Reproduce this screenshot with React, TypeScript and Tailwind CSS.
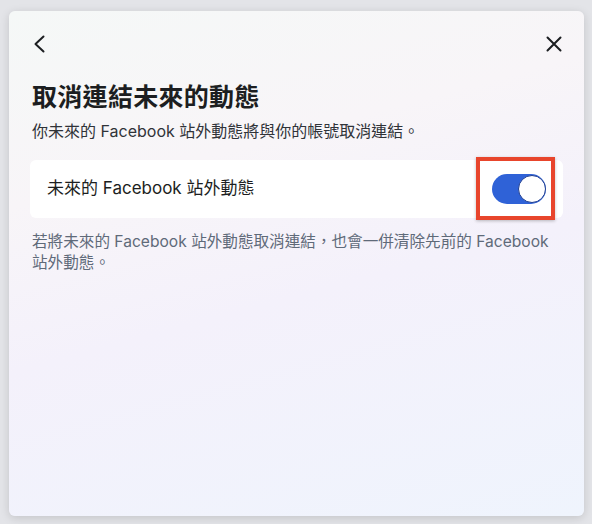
const font = {
  fontFamily: '"Inter", "Noto Sans CJK TC", sans-serif',
};

const App = () => {
  return (
    <div
      className="w-[592px] h-[524px] bg-[#e3e4e8] pt-[11px] pl-[9px] pr-[8px] pb-[8px]"
      style={font}
    >
      <div className="h-full rounded-[6px] shadow-[0_2px_10px_rgba(0,0,0,0.14)] bg-[linear-gradient(165deg,#f5f8f7_0%,#f8f5f8_30%,#f4f1fb_55%,#eff4fd_100%)] px-[21px] pt-[24px]">
        {/* header: back + close */}
        <div className="flex items-center justify-between h-[18px] pl-[3px] pr-[1px]">
          <svg width="13" height="18" viewBox="0 0 13 18" fill="none">
            <path d="M10.5 1.5 L2.5 9 L10.5 16.5" stroke="#1c1e21" strokeWidth="2" strokeLinecap="round" strokeLinejoin="round" />
          </svg>
          <svg width="16" height="16" viewBox="0 0 16 16" fill="none">
            <path d="M1.5 1.5 L14.5 14.5 M14.5 1.5 L1.5 14.5" stroke="#1c1e21" strokeWidth="2" strokeLinecap="round" />
          </svg>
        </div>

        {/* title */}
        <h1 className="mt-[29px] px-[2px] text-[25px] leading-[30px] font-bold text-[#1c1e21] tracking-[0.3px]">
          取消連結未來的動態
        </h1>
        <p className="mt-[8px] px-[2px] text-[16px] leading-[22px] text-[#303338]">
          你未來的 Facebook 站外動態將與你的帳號取消連結。
        </p>

        {/* setting row */}
        <div className="relative mt-[18px] h-[58px] rounded-[6px] bg-white flex items-center justify-between pl-[17px] pr-[17px]">
          <span className="text-[17px] text-[#1c1e21]">未來的 Facebook 站外動態</span>
          <div className="relative w-[54px] h-[30px] rounded-full bg-[#2f62d7]">
            <div className="absolute right-0 top-[1px] w-[28px] h-[28px] rounded-full bg-white border-[1.5px] border-[#1d3d91]" />
          </div>
          {/* highlight box */}
          <div className="absolute right-[8px] top-[-3px] w-[79px] h-[63px] border-[4px] border-[#e8452c] shadow-[0_1px_3px_rgba(0,0,0,0.25)]" />
        </div>

        <p className="mt-[13px] pl-[2px] text-[15.6px] leading-[21px] text-[#5f6a79]">
          若將未來的 Facebook 站外動態取消連結，也會一併清除先前的 Facebook 站外動態。
        </p>
      </div>
    </div>
  );
};

export default App;
